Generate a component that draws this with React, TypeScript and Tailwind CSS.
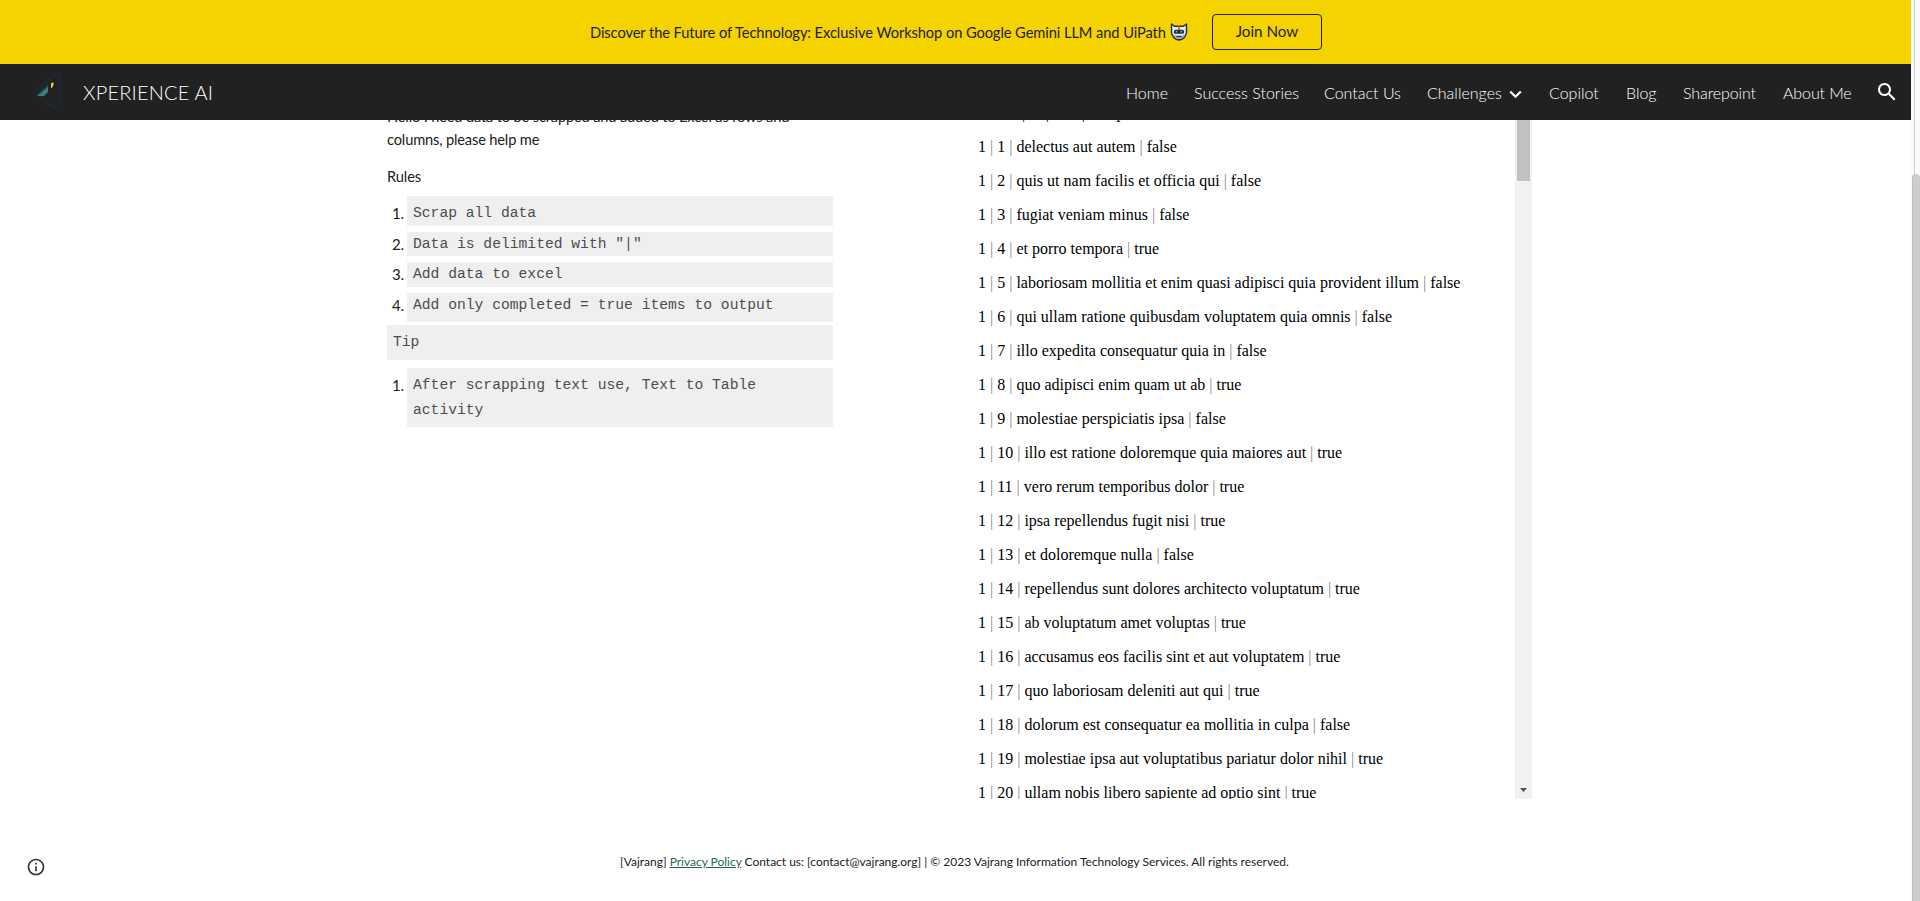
import React from "react";

const nav = ["Home", "Success Stories", "Contact Us", "Challenges", "Copilot", "Blog", "Sharepoint", "About Me"];
const navWidths: Record<string, string> = {
  Home: "w-[42px]",
  "Success Stories": "w-[104px]",
  "Contact Us": "w-[77px]",
  Challenges: "w-[95px] mr-px",
  Copilot: "w-[51px]",
  Blog: "w-[31px]",
  Sharepoint: "w-[74px] tracking-[-0.1px]",
  "About Me": "w-[69px] tracking-[-0.1px]",
};

const todos: [string, boolean][] = [
  ["delectus aut autem", false],
  ["quis ut nam facilis et officia qui", false],
  ["fugiat veniam minus", false],
  ["et porro tempora", true],
  ["laboriosam mollitia et enim quasi adipisci quia provident illum", false],
  ["qui ullam ratione quibusdam voluptatem quia omnis", false],
  ["illo expedita consequatur quia in", false],
  ["quo adipisci enim quam ut ab", true],
  ["molestiae perspiciatis ipsa", false],
  ["illo est ratione doloremque quia maiores aut", true],
  ["vero rerum temporibus dolor", true],
  ["ipsa repellendus fugit nisi", true],
  ["et doloremque nulla", false],
  ["repellendus sunt dolores architecto voluptatum", true],
  ["ab voluptatum amet voluptas", true],
  ["accusamus eos facilis sint et aut voluptatem", true],
  ["quo laboriosam deleniti aut qui", true],
  ["dolorum est consequatur ea mollitia in culpa", false],
  ["molestiae ipsa aut voluptatibus pariatur dolor nihil", true],
  ["ullam nobis libero sapiente ad optio sint", true],
];

function Bar() {
  return <span className="text-[#888]">|</span>;
}

function Mascot() {
  return (
    <svg className="ml-[5px] h-[18px] w-[18px]" viewBox="0 0 18 18">
      <path d="M1.5 1 L4.5 3.3 H13.5 L16.5 1 V9 C16.5 13 13 17 9 17 C5 17 1.5 13 1.5 9 Z" fill="#dcebf5" stroke="#2b2b2b" strokeWidth="1.4" strokeLinejoin="round" />
      <path d="M2.6 10.5 C4 14 6 16 9 16 C12 16 14 14 15.4 10.5 L12 13 H6 Z" fill="#8ba3b5" />
      <path d="M9 2.5 V6.5" stroke="#e2572b" strokeWidth="1.8" />
      <rect x="4" y="6.8" width="10" height="4" rx="1.6" fill="#252c33" />
      <circle cx="6.6" cy="8.7" r="0.9" fill="#48c2d8" />
      <circle cx="11.4" cy="8.7" r="0.9" fill="#48c2d8" />
      <path d="M6.5 13.4 H11.5" stroke="#333" strokeWidth="1.2" />
    </svg>
  );
}

function Logo() {
  return (
    <svg className="h-10 w-8" viewBox="0 0 32 40">
      <path d="M2 19 L20 4 Q27 1 27 8 V31 Q27 38 20 35 L6 25" fill="none" stroke="#1f262e" strokeWidth="3.5" />
      <path d="M4 24 L15 14 L15 20 L11 24 Z" fill="#3f7d84" />
      <path d="M4 22 L15 12.5 L15 14.5 L5 23.5 Z" fill="#1d4348" />
      <path d="M18 11 L20.5 10.5 Q21 14 18 16.5 Z" fill="#d5d943" />
    </svg>
  );
}

function Item({ n, pad, children }: { n: number; pad: string; children: React.ReactNode }) {
  return (
    <li className="flex">
      <span className={"w-5 shrink-0 pl-[5px] text-[15px] leading-[24.6px] tracking-[-0.2px] " + pad}>{n}.</span>
      <span className={"flex-1 bg-[#efefef] pl-[6px] font-['Liberation_Mono',monospace] text-[14.667px] leading-[24.6px] text-[#4d4d4d] " + pad}>
        {children}
      </span>
    </li>
  );
}

export default function App() {
  return (
    <div className="flex h-[901px] w-[1920px] overflow-hidden bg-white font-['Lato',sans-serif] text-[#212121]">
      <div className="flex w-[1911px] shrink-0 flex-col">
        <div className="flex h-16 shrink-0 items-center bg-[#f5d300] pl-[590px] text-[#212121]">
          <span className="w-[575px] whitespace-nowrap pt-[2px] text-[14.667px] tracking-[-0.08px]">
            Discover the Future of Technology: Exclusive Workshop on Google Gemini LLM and UiPath
          </span>
          <Mascot />
          <button className="ml-6 h-9 w-[110px] rounded border border-[#212121] pb-[2px] text-[15.2px]">Join Now</button>
        </div>

        <header className="flex h-14 shrink-0 items-center bg-[#212121] pl-[33px] text-white">
          <Logo />
          <span className="ml-[18px] w-[130px] whitespace-nowrap text-[20px] font-light tracking-[0.2px]">XPERIENCE AI</span>
          <nav className="ml-[913px] flex gap-[26px] pt-[2px] text-[16px] font-light">
            {nav.map((label) => (
              <a key={label} className={"flex items-center whitespace-nowrap " + navWidths[label]}>
                <span>{label}</span>
                {label === "Challenges" && (
                  <svg className="ml-auto mt-[3px] h-[9px] w-[13px] shrink-0" viewBox="0 0 13 9">
                    <path d="M1.2 1.5 L6.5 6.8 L11.8 1.5" fill="none" stroke="#fff" strokeWidth="2.2" />
                  </svg>
                )}
              </a>
            ))}
          </nav>
          <svg className="ml-[23px] h-6 w-6" viewBox="0 0 24 24" fill="#fff">
            <path d="M20.49 19l-5.73-5.73C15.53 12.2 16 10.91 16 9.5 16 5.91 13.09 3 9.5 3S3 5.91 3 9.5 5.91 16 9.5 16c1.41 0 2.7-.47 3.77-1.24L19 20.49 20.49 19zM5 9.5C5 7.01 7.01 5 9.5 5S14 7.01 14 9.5 11.99 14 9.5 14 5 11.99 5 9.5z" />
          </svg>
        </header>

        <main className="flex h-[679px] shrink-0 overflow-hidden pl-[387px]">
          <section className="-mt-[14px] w-[446px] shrink-0 text-[14.667px] leading-[25px]">
            <p className="tracking-[-0.17px]">
              <span className="block leading-[21px]">Hello I need data to be scrapped and added to Excel as rows and</span>
              columns, please help me
            </p>
            <p className="mt-3 tracking-[-0.1px]">Rules</p>
            <ol className="mt-[7px] flex flex-col gap-[6px]">
              <Item n={1} pad="pt-[5px]">Scrap all data</Item>
              <Item n={2} pad="">Data is delimited with "|"</Item>
              <Item n={3} pad="">Add data to excel</Item>
              <Item n={4} pad="pb-[5px]">Add only completed = true items to output</Item>
            </ol>
            <p className="mt-[2.6px] h-[35px] bg-[#efefef] pl-[6px] pt-[5px] font-['Liberation_Mono',monospace] text-[14.667px] text-[#4d4d4d]">
              Tip
            </p>
            <ol className="mt-2">
              <Item n={1} pad="py-[5px]">
                After scrapping text use, Text to Table
                <br />
                activity
              </Item>
            </ol>
          </section>

          <section className="ml-[145px] flex h-[679px] w-[554px] shrink-0">
            <div className="-mt-[24px] h-[703px] w-[537px] shrink-0 overflow-hidden font-['Liberation_Serif',serif] text-[16px] leading-[34px] text-black">
              <p className="whitespace-nowrap">userId | id | title | completed</p>
              {todos.map(([title, done], i) => (
                <p key={title} className="whitespace-nowrap">
                  1 <Bar /> {i + 1} <Bar /> {title} <Bar /> {done ? "true" : "false"}
                </p>
              ))}
            </div>
            <div className="flex w-[17px] shrink-0 flex-col items-center bg-[#f1f1f1]">
              <div className="h-[61px] w-[13px] bg-[#c1c1c1]" />
              <svg className="mb-[7px] mt-auto h-1 w-[7px]" viewBox="0 0 7 4">
                <path d="M0 0 H7 L3.5 4 Z" fill="#505050" />
              </svg>
            </div>
          </section>
        </main>

        <footer className="flex flex-1 items-start pl-[26px] pt-[53px]">
          <svg className="mt-[5px] h-5 w-5" viewBox="0 0 24 24" fill="#333">
            <path d="M11 17h2v-6h-2v6zm1-15C6.48 2 2 6.48 2 12s4.48 10 10 10 10-4.48 10-10S17.52 2 12 2zm0 18c-4.41 0-8-3.59-8-8s3.59-8 8-8 8 3.59 8 8-3.59 8-8 8zM11 9h2V7h-2v2z" />
          </svg>
          <p className="ml-[574px] whitespace-nowrap text-[12px] leading-5 tracking-[-0.015px]">
            [Vajrang] <a className="text-[#1f6656] underline">Privacy Policy</a> Contact us: [contact@vajrang.org] | © 2023 Vajrang Information Technology Services. All rights reserved.
          </p>
        </footer>
      </div>

      <div className="flex flex-1 flex-col bg-[#fafafa]">
        <div className="ml-[3px] h-[174px] border-l border-[#d0d0d0]" />
        <div className="ml-[1px] flex-1 rounded-t border-l border-[#bbb] bg-[#cdcdcd]" />
      </div>
    </div>
  );
}
